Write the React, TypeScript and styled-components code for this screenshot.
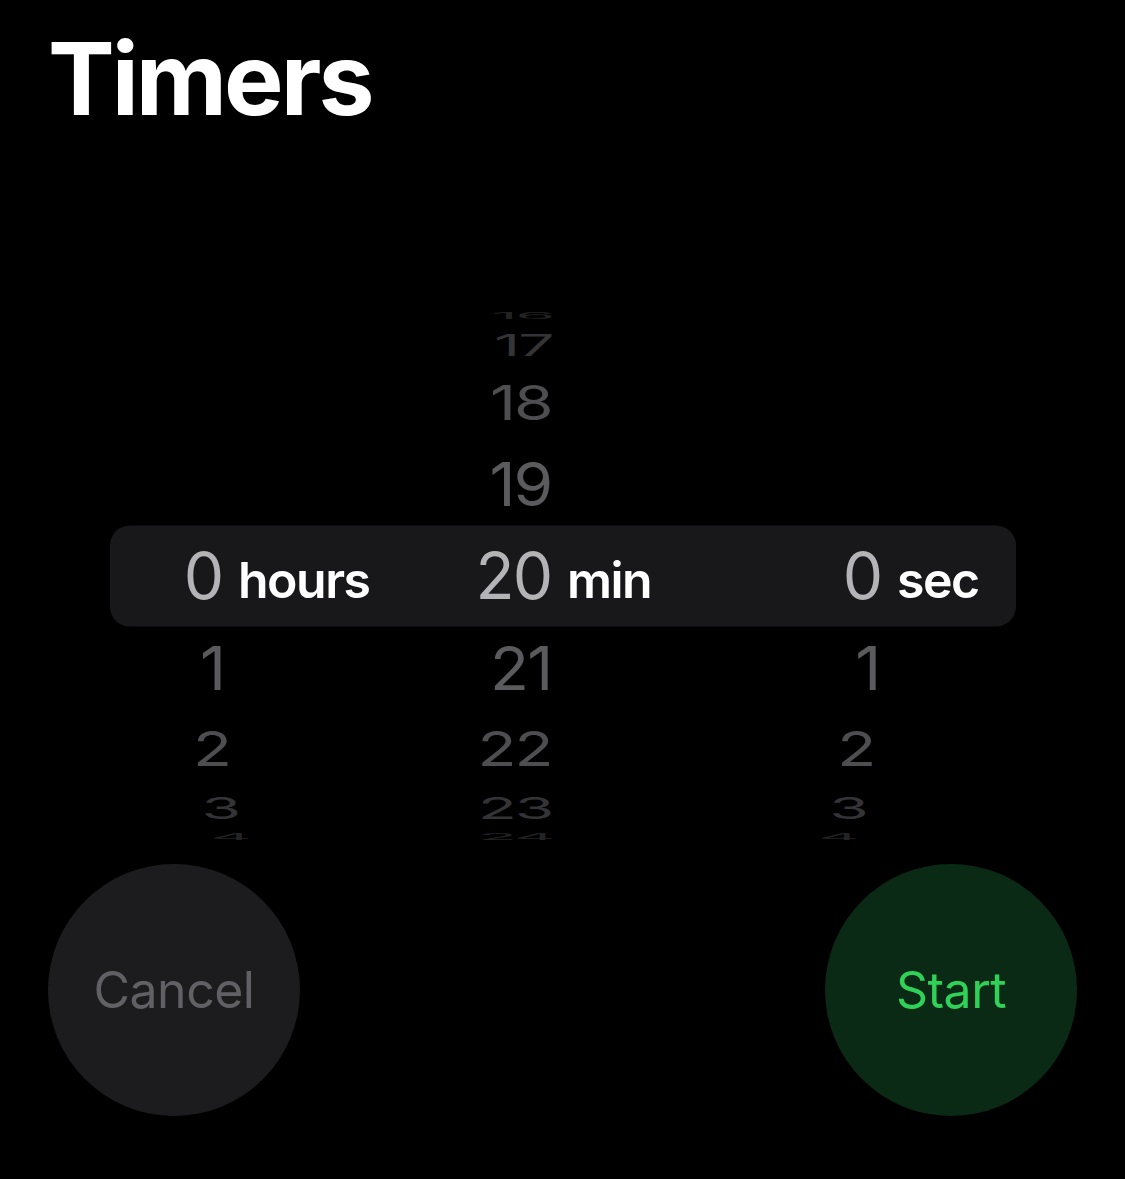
import React from 'react';
import styled, {createGlobalStyle} from 'styled-components';

// ── Wheel geometry ─────────────────────────────────────────────────
// The picker is a cylinder seen from the front: each row sits at an
// angle STEP from its neighbour, so rows get flatter towards the edges.

const RADIUS = 267;
const STEP = (20.6 * Math.PI) / 180;
const OFFSETS = [-4, -3, -2, -1, 0, 1, 2, 3, 4];
const VIEW_CENTER_X = 562;

const rowHeight = (k: number) => {
  const a = Math.abs(k);
  const hi = Math.min((a + 0.5) * STEP, Math.PI / 2);
  const lo = a === 0 ? -0.5 * STEP : (a - 0.5) * STEP;
  return RADIUS * (Math.sin(hi) - Math.sin(lo));
};

const rowShade = (k: number) => {
  const a = Math.abs(k);
  if (a === 0) return '#b4b4b8';
  if (a === 1) return '#5b5b5d';
  if (a === 2) return '#4e4e50';
  if (a === 3) return '#343436';
  return '#232324';
};

// ── Styled components ──────────────────────────────────────────────

const GlobalStyle = createGlobalStyle`
  html, body {
    margin: 0;
    padding: 0;
    background: #000;
  }

  body {
    font-family: Inter, 'Noto Sans', 'Liberation Sans', sans-serif;
    -webkit-font-smoothing: antialiased;
  }
`;

const Screen = styled.div`
  width: 1125px;
  height: 1179px;
  background: #000;
  color: #fff;
  display: flex;
  flex-direction: column;
  overflow: hidden;
`;

const Title = styled.h1`
  margin: 29px 0 0 48px;
  font-size: 100px;
  line-height: 100px;
  font-weight: 700;
  letter-spacing: -3px;
  color: #fff;
`;

const Picker = styled.div`
  position: relative;
  margin-top: 180px;
  height: 534px;
`;

const SelectionBand = styled.div`
  position: absolute;
  left: 110px;
  right: 109px;
  top: 50%;
  height: 101px;
  transform: translateY(-50%);
  border-radius: 20px;
  background: #18181a;
`;

const Columns = styled.div`
  position: relative;
  display: flex;
  height: 100%;
  padding-left: 110px;
`;

const Column = styled.div<{$width: number}>`
  display: flex;
  align-items: center;
  width: ${p => p.$width}px;
  flex-shrink: 0;
`;

const Wheel = styled.div<{$width: number}>`
  display: flex;
  flex-direction: column;
  justify-content: center;
  width: ${p => p.$width}px;
  height: 100%;
  clip-path: inset(0 -200px);
`;

const WheelRow = styled.div`
  display: flex;
  align-items: center;
  justify-content: flex-end;
  flex-shrink: 0;
  overflow: visible;
`;

const WheelNumber = styled.span`
  display: block;
  font-size: 64px;
  line-height: 64px;
  font-weight: 400;
  letter-spacing: -2px;
  white-space: nowrap;
`;

const UnitLabel = styled.span`
  margin: 7px 0 0 16px;
  font-size: 50px;
  line-height: 50px;
  font-weight: 600;
  letter-spacing: -1.5px;
  color: #fff;
`;

const ButtonRow = styled.div`
  display: flex;
  justify-content: space-between;
  padding: 0 48px;
  margin-top: 21px;
`;

const RoundButton = styled.button<{$bg: string; $fg: string}>`
  width: 252px;
  height: 252px;
  border: none;
  border-radius: 50%;
  background: ${p => p.$bg};
  color: ${p => p.$fg};
  font-family: inherit;
  font-size: 50px;
  font-weight: 400;
  letter-spacing: -0.5px;
  display: flex;
  align-items: center;
  justify-content: center;
  padding: 0;
  cursor: pointer;
`;

// ── Component ──────────────────────────────────────────────────────

interface PickerColumnProps {
  value: number;
  max: number;
  unit: string;
  width: number;
  numberWidth: number;
  left: number;
}

const PickerColumn: React.FC<PickerColumnProps> = ({
  value,
  max,
  unit,
  width,
  numberWidth,
  left,
}) => {
  const centerX = left + numberWidth - 18;
  return (
    <Column $width={width}>
      <Wheel $width={numberWidth}>
        {OFFSETS.map(k => {
          const n = value + k;
          const shown = n >= 0 && n <= max;
          const flat = Math.cos(Math.min(Math.abs(k) * STEP, Math.PI / 2));
          const shift = (VIEW_CENTER_X - centerX) * (1 - flat) * 0.09;
          return (
            <WheelRow key={k} style={{height: rowHeight(k)}}>
              {shown && (
                <WheelNumber
                  style={{
                    color: rowShade(k),
                    transform: `translateX(${shift}px) scaleY(${flat})`,
                  }}
                >
                  {n}
                </WheelNumber>
              )}
            </WheelRow>
          );
        })}
      </Wheel>
      <UnitLabel>{unit}</UnitLabel>
    </Column>
  );
};

export default function App() {
  return (
    <>
      <GlobalStyle />
      <Screen>
        <Title>Timers</Title>

        <Picker>
          <SelectionBand />
          <Columns>
            <PickerColumn value={0} max={23} unit="hours" width={302} numberWidth={112} left={110} />
            <PickerColumn value={20} max={59} unit="min" width={328} numberWidth={139} left={412} />
            <PickerColumn value={0} max={59} unit="sec" width={240} numberWidth={141} left={740} />
          </Columns>
        </Picker>

        <ButtonRow>
          <RoundButton $bg="#1c1c1e" $fg="#616165">Cancel</RoundButton>
          <RoundButton $bg="#0a2a15" $fg="#30d158">Start</RoundButton>
        </ButtonRow>
      </Screen>
    </>
  );
}
